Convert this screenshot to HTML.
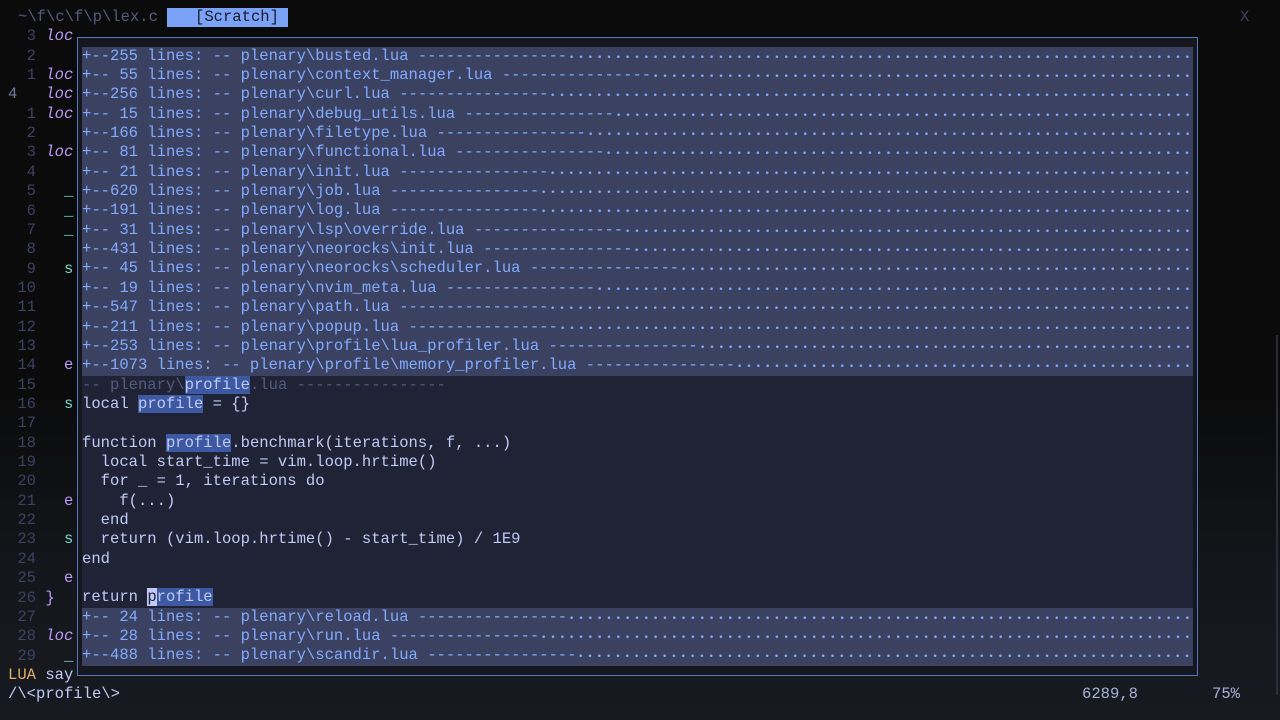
<!DOCTYPE html>
<html><head><meta charset="utf-8"><style>
html,body{margin:0;padding:0;width:1280px;height:720px;overflow:hidden;background:#0b0b0c;}
body{font-family:"Liberation Mono","DejaVu Sans Mono",monospace;font-size:15.55px;line-height:19.35px;color:#c0caf5;position:relative;
background:linear-gradient(180deg,#0b0b0c 0%,#0b0b0c 55%,#14161b 80%,#171a20 100%);}
.r{position:absolute;left:0;height:19.35px;white-space:pre;}
.ln{color:#3b4261;}
.cur{color:#737aa2;}
.loc{color:#bb9af7;font-style:italic;}
.g{color:#73daca;}
.p{color:#bb9af7;}
#float{position:absolute;left:77px;top:37px;width:1121px;height:639px;border:1px solid #5577c0;box-sizing:border-box;background:#16161e;}
#inner{position:absolute;left:82px;top:46.7px;width:1111px;}
.fr{height:19.35px;white-space:pre;overflow:hidden;}
.fold{background:#3b4261;color:#82aaff;display:flex;}
.fold .d{flex:1;background-image:radial-gradient(circle at 4.66px 9.9px,#82aaff 0,#82aaff 1.1px,transparent 1.5px);background-size:9.33px 19.35px;background-repeat:repeat-x;}
.code{background:#1f2335;}
.cm{color:#545c7e;}
.hl{background:#3d59a1;color:#c0caf5;}
.cursor{background:#c0caf5;color:#1f2335;}
</style></head><body>
<div class="r" style="top:8px;left:18px;color:#545c7e">~\f\c\f\p\lex.c</div>
<div class="r" style="top:8px;left:167px;width:121px;background:#7aa2f7;color:#1a1b26">   [Scratch]</div>
<div class="r" style="top:8px;left:1240px;color:#3b4261">X</div>

<div class="r" style="top:27.35px;left:8px"><span class="ln">  3 </span><span class="loc">loc</span></div>
<div class="r" style="top:46.7px;left:8px"><span class="ln">  2</span></div>
<div class="r" style="top:66.05px;left:8px"><span class="ln">  1 </span><span class="loc">loc</span></div>
<div class="r" style="top:85.4px;left:8px"><span class="cur">4   </span><span class="loc">loc</span></div>
<div class="r" style="top:104.75px;left:8px"><span class="ln">  1 </span><span class="loc">loc</span></div>
<div class="r" style="top:124.1px;left:8px"><span class="ln">  2</span></div>
<div class="r" style="top:143.45px;left:8px"><span class="ln">  3 </span><span class="loc">loc</span></div>
<div class="r" style="top:162.8px;left:8px"><span class="ln">  4</span></div>
<div class="r" style="top:182.15px;left:8px"><span class="ln">  5   </span><span class="g">_</span></div>
<div class="r" style="top:201.5px;left:8px"><span class="ln">  6   </span><span class="g">_</span></div>
<div class="r" style="top:220.85px;left:8px"><span class="ln">  7   </span><span class="g">_</span></div>
<div class="r" style="top:240.2px;left:8px"><span class="ln">  8</span></div>
<div class="r" style="top:259.55px;left:8px"><span class="ln">  9   </span><span class="g">s</span></div>
<div class="r" style="top:278.9px;left:8px"><span class="ln"> 10</span></div>
<div class="r" style="top:298.25px;left:8px"><span class="ln"> 11</span></div>
<div class="r" style="top:317.6px;left:8px"><span class="ln"> 12</span></div>
<div class="r" style="top:336.95px;left:8px"><span class="ln"> 13</span></div>
<div class="r" style="top:356.3px;left:8px"><span class="ln"> 14   </span><span class="p">e</span></div>
<div class="r" style="top:375.65px;left:8px"><span class="ln"> 15</span></div>
<div class="r" style="top:395px;left:8px"><span class="ln"> 16   </span><span class="g">s</span></div>
<div class="r" style="top:414.35px;left:8px"><span class="ln"> 17</span></div>
<div class="r" style="top:433.7px;left:8px"><span class="ln"> 18</span></div>
<div class="r" style="top:453.05px;left:8px"><span class="ln"> 19</span></div>
<div class="r" style="top:472.4px;left:8px"><span class="ln"> 20</span></div>
<div class="r" style="top:491.75px;left:8px"><span class="ln"> 21   </span><span class="p">e</span></div>
<div class="r" style="top:511.1px;left:8px"><span class="ln"> 22</span></div>
<div class="r" style="top:530.45px;left:8px"><span class="ln"> 23   </span><span class="g">s</span></div>
<div class="r" style="top:549.8px;left:8px"><span class="ln"> 24</span></div>
<div class="r" style="top:569.15px;left:8px"><span class="ln"> 25   </span><span class="p">e</span></div>
<div class="r" style="top:588.5px;left:8px"><span class="ln"> 26 </span><span class="p">}</span></div>
<div class="r" style="top:607.85px;left:8px"><span class="ln"> 27</span></div>
<div class="r" style="top:627.2px;left:8px"><span class="ln"> 28 </span><span class="loc">loc</span></div>
<div class="r" style="top:646.55px;left:8px"><span class="ln"> 29   </span><span class="g">_</span></div>
<div class="r" style="top:665.9px;left:8px"><span style="color:#e0af68">LUA</span> say</div>
<div class="r" style="top:685.25px;left:8px">/\&lt;profile\&gt;</div>
<div class="r" style="top:685.25px;left:1082px;color:#a9b1d6">6289,8</div>
<div class="r" style="top:685.25px;left:1212px;color:#a9b1d6">75%</div>
<div style="position:absolute;left:1276px;top:335px;width:2px;height:360px;background:#2a2e3a"></div>

<div id="float"></div>
<div id="inner">
<div class="fr fold"><span>+--255 lines: -- plenary\busted.lua ----------------</span><span class="d"></span></div>
<div class="fr fold"><span>+-- 55 lines: -- plenary\context_manager.lua ----------------</span><span class="d"></span></div>
<div class="fr fold"><span>+--256 lines: -- plenary\curl.lua ----------------</span><span class="d"></span></div>
<div class="fr fold"><span>+-- 15 lines: -- plenary\debug_utils.lua ----------------</span><span class="d"></span></div>
<div class="fr fold"><span>+--166 lines: -- plenary\filetype.lua ----------------</span><span class="d"></span></div>
<div class="fr fold"><span>+-- 81 lines: -- plenary\functional.lua ----------------</span><span class="d"></span></div>
<div class="fr fold"><span>+-- 21 lines: -- plenary\init.lua ----------------</span><span class="d"></span></div>
<div class="fr fold"><span>+--620 lines: -- plenary\job.lua ----------------</span><span class="d"></span></div>
<div class="fr fold"><span>+--191 lines: -- plenary\log.lua ----------------</span><span class="d"></span></div>
<div class="fr fold"><span>+-- 31 lines: -- plenary\lsp\override.lua ----------------</span><span class="d"></span></div>
<div class="fr fold"><span>+--431 lines: -- plenary\neorocks\init.lua ----------------</span><span class="d"></span></div>
<div class="fr fold"><span>+-- 45 lines: -- plenary\neorocks\scheduler.lua ----------------</span><span class="d"></span></div>
<div class="fr fold"><span>+-- 19 lines: -- plenary\nvim_meta.lua ----------------</span><span class="d"></span></div>
<div class="fr fold"><span>+--547 lines: -- plenary\path.lua ----------------</span><span class="d"></span></div>
<div class="fr fold"><span>+--211 lines: -- plenary\popup.lua ----------------</span><span class="d"></span></div>
<div class="fr fold"><span>+--253 lines: -- plenary\profile\lua_profiler.lua ----------------</span><span class="d"></span></div>
<div class="fr fold"><span>+--1073 lines: -- plenary\profile\memory_profiler.lua ----------------</span><span class="d"></span></div>
<div class="fr code"><span class="cm">-- plenary\</span><span class="hl">profile</span><span class="cm">.lua ----------------</span></div>
<div class="fr code">local <span class="hl">profile</span> = {}</div>
<div class="fr code"> </div>
<div class="fr code">function <span class="hl">profile</span>.benchmark(iterations, f, ...)</div>
<div class="fr code">  local start_time = vim.loop.hrtime()</div>
<div class="fr code">  for _ = 1, iterations do</div>
<div class="fr code">    f(...)</div>
<div class="fr code">  end</div>
<div class="fr code">  return (vim.loop.hrtime() - start_time) / 1E9</div>
<div class="fr code">end</div>
<div class="fr code"> </div>
<div class="fr code">return <span class="cursor">p</span><span class="hl">rofile</span></div>
<div class="fr fold"><span>+-- 24 lines: -- plenary\reload.lua ----------------</span><span class="d"></span></div>
<div class="fr fold"><span>+-- 28 lines: -- plenary\run.lua ----------------</span><span class="d"></span></div>
<div class="fr fold"><span>+--488 lines: -- plenary\scandir.lua ----------------</span><span class="d"></span></div>
</div>
</body></html>
